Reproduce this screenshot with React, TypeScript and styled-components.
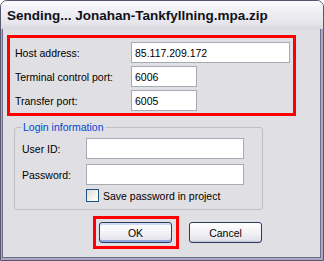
import React from 'react';
import styled, { createGlobalStyle } from 'styled-components';

const GlobalStyle = createGlobalStyle`
  html, body {
    margin: 0;
    padding: 0;
    background: #ffffff;
  }
  body {
    font-family: "Liberation Sans", Arial, sans-serif;
  }
`;

const Window = styled.div`
  width: 324px;
  height: 261px;
  box-sizing: border-box;
  border: 1px solid #57566f;
  border-radius: 7px 7px 0 0;
  background: #e0dfe3;
  display: flex;
  flex-direction: column;
  overflow: hidden;
`;

const TitleBar = styled.div`
  height: 28px;
  flex: none;
  display: flex;
  align-items: center;
  padding-left: 6px;
  background: linear-gradient(#fcfcfe 0%, #efeff4 35%, #e6e5ec 80%, #d9d8e2 100%);
  font-size: 13.5px;
  font-weight: bold;
  color: #111118;
`;

const Frame = styled.div`
  flex: 1;
  display: flex;
  flex-direction: column;
  border-style: solid;
  border-color: #a9a8be;
  border-width: 0 2px 2px 1px;
  box-shadow: inset 1px 0 #6f6e8a, inset -1px 0 #6f6e8a, inset 0 -1px #6f6e8a;
  padding: 6px 0 0 5px;
  font-size: 10.5px;
  color: #000;
`;

const Highlight = styled.div<{ $pad: string }>`
  border: 3px solid #ff0000;
  padding: ${p => p.$pad};
  box-sizing: border-box;
`;

const ServerBox = styled(Highlight)`
  width: 289px;
`;

const FieldGrid = styled.div<{ $label: number; $gap: number }>`
  display: grid;
  grid-template-columns: ${p => p.$label}px auto;
  row-gap: ${p => p.$gap}px;
  align-items: center;
  justify-items: start;
`;

const Label = styled.label`
  line-height: 12px;
  white-space: nowrap;
`;

const TextInput = styled.input<{ $w: number }>`
  width: ${p => p.$w}px;
  height: 21px;
  box-sizing: border-box;
  border: 1px solid #a5acb2;
  background: #ffffff;
  padding: 0 3px;
  margin: 0;
  font-family: inherit;
  font-size: 10.5px;
  color: #000;
  outline: none;
`;

const Group = styled.fieldset`
  width: 249px;
  box-sizing: border-box;
  margin: 5px 0 0 7px;
  padding: 0 0 7px 7px;
  border: 1px solid #c0bfc6;
  border-radius: 3px;
`;

const Legend = styled.legend`
  padding: 0 1px;
  line-height: 12px;
  color: #0046d5;
`;

const Rows = styled(FieldGrid)`
  margin-top: 5px;
`;

const CheckRow = styled.div`
  grid-column: 2;
  display: flex;
  align-items: center;
  gap: 4px;
  height: 13px;
  margin-top: -1px;
`;

const CheckBox = styled.span`
  width: 13px;
  height: 13px;
  box-sizing: border-box;
  border: 1px solid #1c5180;
  background: linear-gradient(135deg, #dcdcd7 0%, #f4f4f0 60%, #ffffff 100%);
`;

const ButtonRow = styled.div`
  display: flex;
  align-items: center;
  gap: 10px;
  margin: 6px 0 0 86px;
`;

const OkBox = styled(Highlight)`
  display: flex;
`;

const Button = styled.button<{ $default?: boolean }>`
  width: 73px;
  height: 21px;
  box-sizing: border-box;
  margin: 0;
  padding: 0;
  border: 1px solid #2e3b5e;
  border-radius: 3px;
  background: linear-gradient(#ffffff 0%, #f4f4f8 45%, #e6e5ee 85%, #d4d3df 100%);
  box-shadow: ${p => (p.$default ? 'inset 0 -2px #8fa7e0, inset 0 2px #cfdcf7' : 'inset 0 -1px #c9c8d6')};
  font-family: inherit;
  font-size: 10.5px;
  color: #000;
`;

export default function App() {
  return (
    <>
      <GlobalStyle />
      <Window>
        <TitleBar>Sending... Jonahan-Tankfyllning.mpa.zip</TitleBar>
        <Frame>
          <ServerBox $pad="4px 2px 2px 5px">
            <FieldGrid $label={116} $gap={3}>
              <Label>Host address:</Label>
              <TextInput $w={159} defaultValue="85.117.209.172" />
              <Label>Terminal control port:</Label>
              <TextInput $w={66} defaultValue="6006" />
              <Label>Transfer port:</Label>
              <TextInput $w={66} defaultValue="6005" />
            </FieldGrid>
          </ServerBox>
          <Group>
            <Legend>Login information</Legend>
            <Rows $label={64} $gap={5}>
              <Label>User ID:</Label>
              <TextInput $w={158} />
              <Label>Password:</Label>
              <TextInput $w={158} type="text" />
              <CheckRow>
                <CheckBox />
                <Label>Save password in project</Label>
              </CheckRow>
            </Rows>
          </Group>
          <ButtonRow>
            <OkBox $pad="3px 4px 3px 3px">
              <Button $default>OK</Button>
            </OkBox>
            <Button>Cancel</Button>
          </ButtonRow>
        </Frame>
      </Window>
    </>
  );
}
